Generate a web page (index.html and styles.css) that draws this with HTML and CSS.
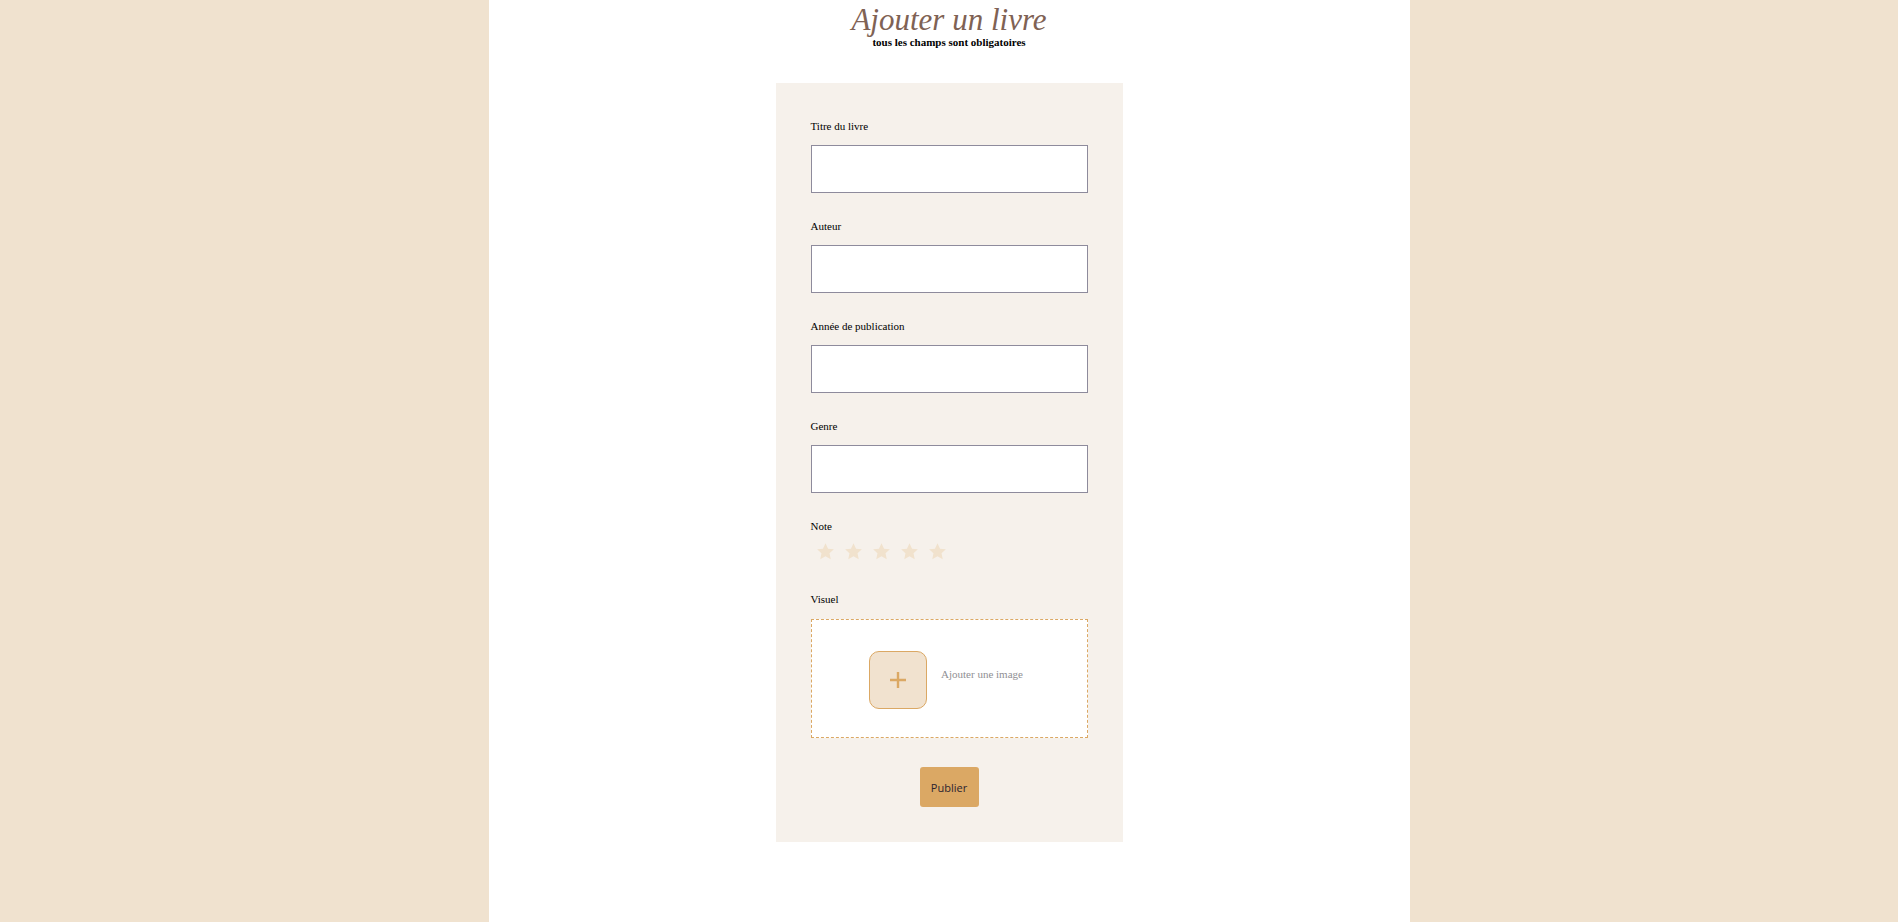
FILE: index.html
```html
<!DOCTYPE html>
<html lang="fr">
<head>
<meta charset="utf-8">
<title>Ajouter un livre</title>
<link rel="stylesheet" href="styles.css">
</head>
<body>
<main class="page">
  <header class="head">
    <h1 class="title">Ajouter un livre</h1>
    <p class="subtitle">tous les champs sont obligatoires</p>
  </header>
  <form class="form">
    <div class="field">
      <label class="label" for="titre">Titre du livre</label>
      <input class="input" id="titre" type="text">
    </div>
    <div class="field">
      <label class="label" for="auteur">Auteur</label>
      <input class="input" id="auteur" type="text">
    </div>
    <div class="field">
      <label class="label" for="annee">Année de publication</label>
      <input class="input" id="annee" type="text">
    </div>
    <div class="field">
      <label class="label" for="genre">Genre</label>
      <input class="input" id="genre" type="text">
    </div>
    <div class="field field-note">
      <span class="label">Note</span>
      <div class="stars">
        <svg class="star" viewBox="0 0 24 24"><path d="M12 1.5l3.2 6.9 7.4.8-5.5 5.1 1.5 7.4L12 17.9l-6.6 3.8 1.5-7.4-5.5-5.1 7.4-.8z"/></svg>
        <svg class="star" viewBox="0 0 24 24"><path d="M12 1.5l3.2 6.9 7.4.8-5.5 5.1 1.5 7.4L12 17.9l-6.6 3.8 1.5-7.4-5.5-5.1 7.4-.8z"/></svg>
        <svg class="star" viewBox="0 0 24 24"><path d="M12 1.5l3.2 6.9 7.4.8-5.5 5.1 1.5 7.4L12 17.9l-6.6 3.8 1.5-7.4-5.5-5.1 7.4-.8z"/></svg>
        <svg class="star" viewBox="0 0 24 24"><path d="M12 1.5l3.2 6.9 7.4.8-5.5 5.1 1.5 7.4L12 17.9l-6.6 3.8 1.5-7.4-5.5-5.1 7.4-.8z"/></svg>
        <svg class="star" viewBox="0 0 24 24"><path d="M12 1.5l3.2 6.9 7.4.8-5.5 5.1 1.5 7.4L12 17.9l-6.6 3.8 1.5-7.4-5.5-5.1 7.4-.8z"/></svg>
      </div>
    </div>
    <div class="field field-visuel">
      <span class="label">Visuel</span>
      <div class="dropzone">
        <div class="addbox">
          <svg viewBox="0 0 20 20" width="20" height="20"><path d="M10 2v16M2 10h16" stroke="#dba864" stroke-width="2.4" fill="none"/></svg>
        </div>
        <span class="droptext">Ajouter une image</span>
      </div>
    </div>
    <div class="actions">
      <button class="btn" type="button">Publier</button>
    </div>
  </form>
</main>
</body>
</html>
```
FILE: styles.css
```css
html, body {
  margin: 0;
  padding: 0;
}
body {
  background: #f0e2cf;
  font-family: "Liberation Serif", "Times New Roman", serif;
  color: #000;
}
.page {
  width: 921px;
  min-height: 100vh;
  margin: 0 auto;
  background: #ffffff;
  display: flex;
  flex-direction: column;
  align-items: center;
}
.head {
  text-align: center;
  padding-top: 4px;
}
.title {
  margin: 0;
  font-size: 31px;
  line-height: 32px;
  font-style: italic;
  font-weight: normal;
  color: #7f6254;
}
.subtitle {
  margin: 0;
  font-size: 11px;
  line-height: 12px;
  font-weight: bold;
}
.form {
  margin-top: 35px;
  width: 277px;
  padding: 37px 35px 35px;
  background: #f6f1eb;
  display: flex;
  flex-direction: column;
}
.field {
  display: flex;
  flex-direction: column;
  margin-bottom: 27px;
}
.label {
  font-size: 11px;
  line-height: 13px;
  margin-bottom: 12px;
}
.input {
  box-sizing: border-box;
  width: 277px;
  height: 48px;
  margin: 0;
  border: 1px solid #8e8b9c;
  background: #fff;
}
.field-note {
  margin-bottom: 32px;
}
.field-note .label {
  margin-bottom: 9px;
}
.stars {
  display: flex;
  gap: 9px;
  padding-left: 5px;
}
.star {
  width: 19px;
  height: 19px;
  fill: #f1e2cd;
}
.field-visuel {
  margin-bottom: 29px;
}
.field-visuel .label {
  margin-bottom: 13px;
}
.dropzone {
  box-sizing: border-box;
  height: 119px;
  border: 1px dashed #dba864;
  background: #fff;
  display: flex;
  align-items: center;
  justify-content: center;
  gap: 14px;
  padding-right: 6px;
}
.addbox {
  box-sizing: border-box;
  width: 58px;
  height: 58px;
  margin-top: 2px;
  border: 1px solid #dba864;
  border-radius: 10px;
  background: #f1e2cf;
  display: flex;
  align-items: center;
  justify-content: center;
}
.droptext {
  font-size: 11px;
  color: #8f8f93;
  margin-top: -10px;
}
.actions {
  display: flex;
  justify-content: center;
}
.btn {
  width: 59px;
  height: 40px;
  border: none;
  border-radius: 3px;
  background: #dba864;
  color: #2b2430;
  font-family: "Open Sans", "Noto Sans", sans-serif;
  font-size: 11px;
  padding: 0;
}
```
